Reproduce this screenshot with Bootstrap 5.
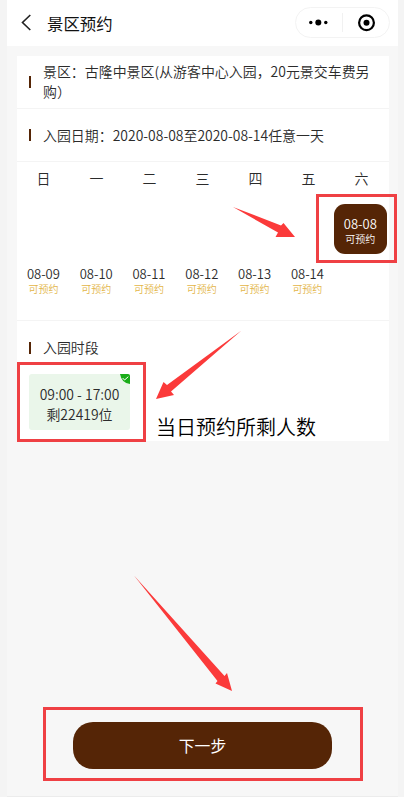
<!DOCTYPE html>
<html lang="zh-CN">
<head>
<meta charset="utf-8">
<meta name="viewport" content="width=device-width, initial-scale=1">
<title>景区预约</title>
<link href="https://cdn.jsdelivr.net/npm/bootstrap@5.3.0/dist/css/bootstrap.min.css" rel="stylesheet">
<style>
body { font-family: "Noto Sans CJK SC", sans-serif; font-size: 13.95px; font-weight: 350; line-height: 20px; color: #2b2b2b; background: #f4f4f4; overflow: hidden; }
.phone { width: 391px; height: 797px; margin-left: 7px; background: #f7f7f7; border-bottom: 1px solid #ececec; }
.topbar { height: 46px; padding: 0 8px 0 14px; }
.page-title { font-size: 16.4px; color: #111; margin-left: 15px; margin-top: -1px; font-weight: 400; }
.capsule { width: 95px; height: 31px; margin-top: -1px; border: 1px solid #f3f3f3; border-radius: 16px; }
.panel { width: 372px; margin: 10px 0 0 10px; }
.line-row { border-bottom: 1px solid #f4f4f4; padding: 0 12px; }
.row-spot { height: 53px; }
.row-date { height: 53px; }
.tick { width: 2px; height: 12px; background: #552506; margin-right: 12px; }
.spot-text { width: 335px; margin-top: -2px; }
.calendar { height: 159px; border-bottom: 1px solid #f4f4f4; padding-top: 6px; }
.week { display: grid; grid-template-columns: repeat(7, 52.8px); text-align: center; }
.weekdays { grid-template-columns: repeat(7, 53px); }
.dates-a { margin-top: 16px; }
.day { height: 50px; padding-top: 11px; font-size: 13px; line-height: 17px; }
.day small { display: block; font-size: 10px; line-height: 15px; margin-top: -1px; color: #e3b547; }
.day.chosen { grid-column: 7; background: #552506; color: #fff; border-radius: 11px; width: 53px; }
.day.chosen small { color: #fff; }
.slot-head { height: 53px; padding: 0 12px; }
.slot-head span { margin-top: -2px; }
.slot { width: 101px; height: 56px; margin-left: 12px; background: #eaf6ea; border-radius: 3px; padding-top: 10px; }
.slot-check { right: 0; top: 0; }
.slots { height: 67px; }
.next-zone { padding-top: 281px; }
.next-btn, .next-btn:hover { width: 259px; height: 47px; margin-left: 66px; background: #552506; color: #fff; border-radius: 20px; font-size: 15.8px; line-height: 20px; }
.marks { left: 0; top: 0; z-index: 5; pointer-events: none; }
.marks text { font: 350 20px "Noto Sans CJK SC", sans-serif; fill: #000; }
</style>
<script src="https://cdn.jsdelivr.net/npm/bootstrap@5.3.0/dist/js/bootstrap.bundle.min.js"></script>
</head>
<body>
<main class="phone">
  <header class="topbar bg-white d-flex align-items-center">
    <svg width="11" height="18" viewBox="0 0 11 18" fill="none" stroke="#222" stroke-width="1.6"><path d="M9.300 1 1.500 8.500l7.800 7.500"/></svg>
    <span class="page-title">景区预约</span>
    <div class="capsule ms-auto">
      <svg class="d-block" width="93" height="29" viewBox="0 0 93 29"><g fill="#000"><circle cx="14.800" cy="14.500" r="1.700"/><circle cx="22.300" cy="14.500" r="3"/><circle cx="29.800" cy="14.500" r="1.700"/><circle cx="70.500" cy="14.700" r="3"/></g><path d="M46.500 5v19" stroke="#f1f1f1"/><circle cx="70.500" cy="14.700" r="7.400" fill="none" stroke="#000" stroke-width="2.200"/></svg>
    </div>
  </header>
  <section class="panel bg-white">
    <div class="line-row row-spot d-flex align-items-center"><i class="tick flex-shrink-0"></i><div class="spot-text">景区：古隆中景区(从游客中心入园，20元景交车费另购）</div></div>
    <div class="line-row row-date d-flex align-items-center"><i class="tick"></i><span>入园日期：2020-08-08至2020-08-14任意一天</span></div>
    <div class="calendar">
      <div class="week weekdays"><span>日</span><span>一</span><span>二</span><span>三</span><span>四</span><span>五</span><span>六</span></div>
      <div class="week dates-a"><div class="day chosen">08-08<small>可预约</small></div></div>
      <div class="week">
        <div class="day">08-09<small>可预约</small></div><div class="day">08-10<small>可预约</small></div><div class="day">08-11<small>可预约</small></div><div class="day">08-12<small>可预约</small></div><div class="day">08-13<small>可预约</small></div><div class="day">08-14<small>可预约</small></div>
      </div>
    </div>
    <div class="slot-head d-flex align-items-center"><i class="tick"></i><span>入园时段</span></div>
    <div class="slots">
      <div class="slot position-relative text-center">09:00 - 17:00<br>剩22419位
        <svg class="slot-check position-absolute" width="10" height="10" viewBox="0 0 10 10"><path d="M0 0h8q2 0 2 2v8Q1.500 9 0 0Z" fill="#1aad19"/><path d="m2.600 4 2 2L8.300 2.700" fill="none" stroke="#fff"/></svg>
      </div>
    </div>
  </section>
  <div class="next-zone"><button type="button" class="btn next-btn border-0 p-0">下一步</button></div>
</main>
<svg class="marks position-absolute" width="404" height="797" viewBox="0 0 404 797">
  <g fill="none" stroke="#ef4044" stroke-width="3"><path d="M317.500 195.500h78v66h-78zM18.500 363.500h126v77h-126zM44.500 708.500h317v71h-317z"/></g>
  <g fill="#fb3a3a">
    <path d="M233 207 281 225.500 283.500 223 295 237 275.500 237 278 232.500Z"/>
    <path d="M241.500 330.500 167 385 163.500 382 156 399 174 395 171 391.500Z"/>
    <path d="M134 575.500 217.500 681 215.500 683.500 232 691 227 673 224.500 676Z"/>
  </g>
  <text x="156" y="434.500">当日预约所剩人数</text>
</svg>
</body>
</html>
